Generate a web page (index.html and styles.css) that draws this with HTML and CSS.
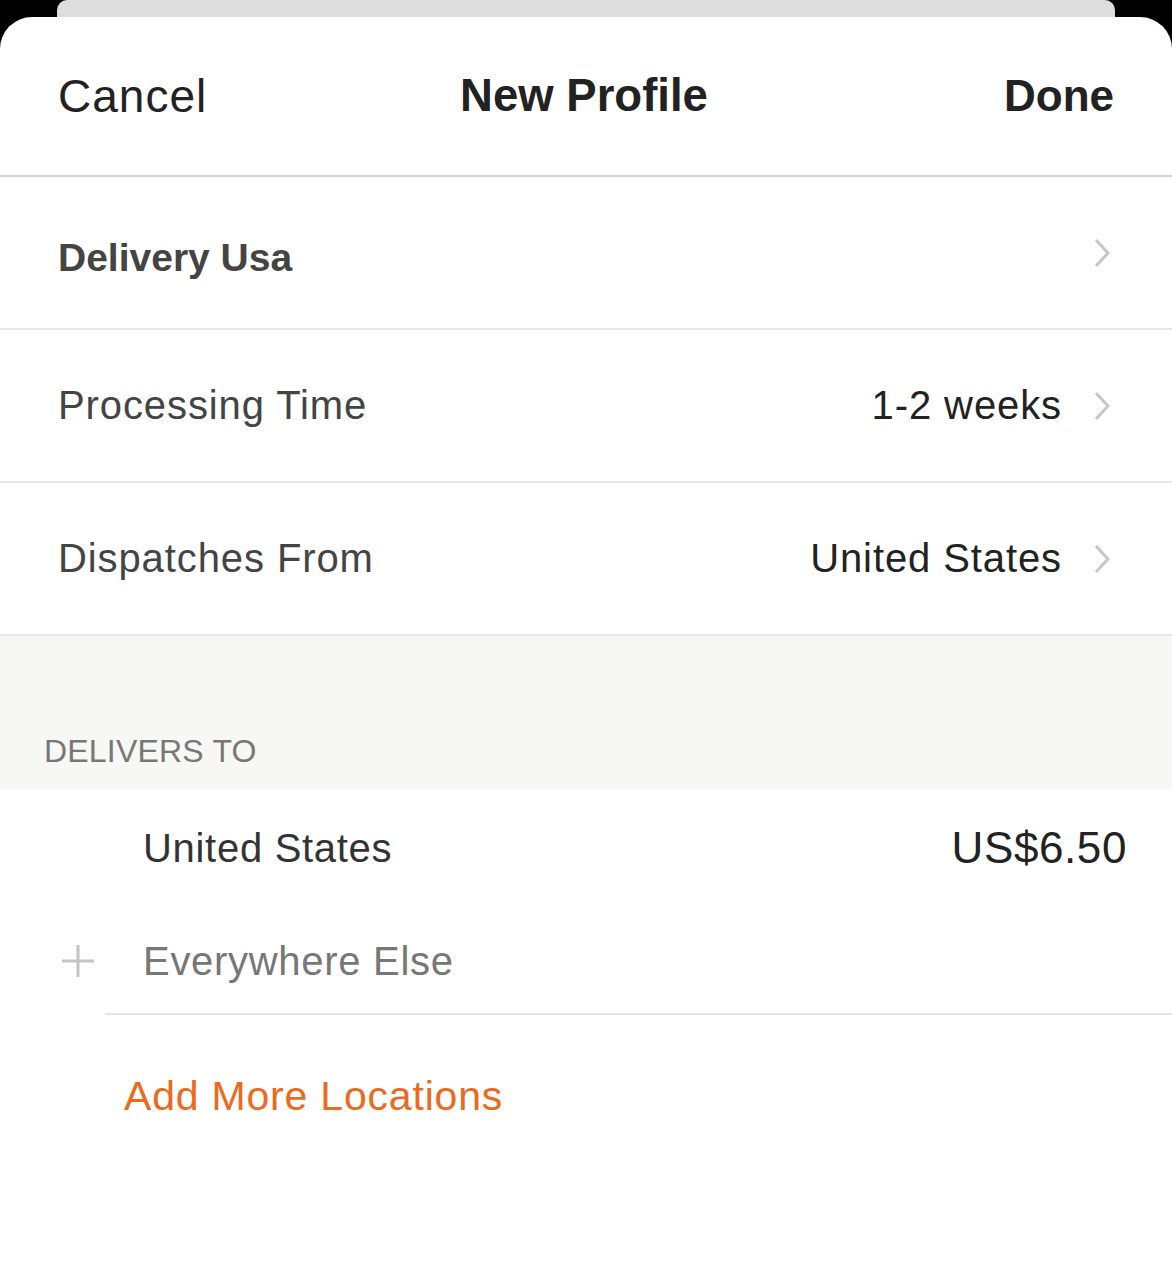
FILE: index.html
```html
<!DOCTYPE html>
<html>
<head>
  <title>New Profile</title>
  <meta http-equiv="Content-Type" content="text/html; charset=UTF-8">
  <link rel="stylesheet" href="styles.css">
</head>
<body>
  <div class="backcard"></div>

  <div class="sheet">
    <div class="header">
      <span class="header-cancel">Cancel</span>
      <span class="header-title">New Profile</span>
      <span class="header-done">Done</span>
    </div>

    <div class="row row-name">
      <span class="row-label">Delivery Usa</span>
      <span class="row-right">
        <svg class="chevron" viewBox="0 0 18 32"><path d="M3 3 L15 16 L3 29" /></svg>
      </span>
    </div>

    <div class="row">
      <span class="row-label">Processing Time</span>
      <span class="row-right">
        <span class="row-value">1-2 weeks</span>
        <svg class="chevron" viewBox="0 0 18 32"><path d="M3 3 L15 16 L3 29" /></svg>
      </span>
    </div>

    <div class="row">
      <span class="row-label">Dispatches From</span>
      <span class="row-right">
        <span class="row-value">United States</span>
        <svg class="chevron" viewBox="0 0 18 32"><path d="M3 3 L15 16 L3 29" /></svg>
      </span>
    </div>

    <div class="section-head">DELIVERS TO</div>

    <div class="dest">
      <div class="dest-row">
        <span class="dest-icon"></span>
        <span class="dest-name">United States</span>
        <span class="dest-price">US$6.50</span>
      </div>
      <div class="dest-row dest-add">
        <span class="dest-icon">
          <svg class="plus" viewBox="0 0 34 34"><path d="M17 1 V33 M1 17 H33" /></svg>
        </span>
        <span class="dest-name muted">Everywhere Else</span>
      </div>
      <div class="dest-more">Add More Locations</div>
    </div>
  </div>
</body>
</html>
```

FILE: styles.css
```css
body {
  margin: 0;
  padding: 0;
  background: #000;
  font-family: "Liberation Sans", Arial, sans-serif;
  color: #222;
}

.backcard {
  height: 17px;
  margin: 0 57px;
  background: #dedede;
  border-radius: 10px 10px 0 0;
}

.sheet {
  background: #fff;
  border-radius: 32px 32px 0 0;
  min-height: 1263px;
}

.header {
  display: grid;
  grid-template-columns: 1fr auto 1fr;
  align-items: center;
  height: 158px;
  padding: 0 58px;
  border-bottom: 2px solid #d4d4d4;
}

.header-cancel {
  font-size: 46px;
  letter-spacing: 1px;
  color: #222;
}

.header-title {
  font-size: 45.5px;
  font-weight: bold;
  color: #222;
  padding-right: 4px;
}

.header-done {
  font-size: 44px;
  font-weight: bold;
  color: #222;
  text-align: right;
}

.row {
  display: flex;
  justify-content: space-between;
  align-items: center;
  height: 151px;
  padding: 0 61px 0 58px;
  border-bottom: 2px solid #e8e8e8;
  font-size: 40px;
  letter-spacing: 0.9px;
}

.row-label {
  color: #444;
}

.row-name .row-label {
  font-weight: bold;
  font-size: 39px;
  letter-spacing: 0;
  padding-top: 10px;
}

.row-right {
  display: flex;
  align-items: center;
  gap: 31px;
}

.row-value {
  color: #222;
}

.chevron {
  width: 18px;
  height: 32px;
  fill: none;
  stroke: #c6c6c6;
  stroke-width: 3;
}

.section-head {
  display: flex;
  align-items: flex-end;
  height: 134px;
  padding: 0 0 19px 44px;
  background: #f7f7f3;
  font-size: 32px;
  letter-spacing: 0.2px;
  color: #777;
}

.dest-row {
  display: flex;
  align-items: center;
  height: 118px;
  padding-right: 45px;
  font-size: 40px;
  letter-spacing: 0.7px;
}

.dest-icon {
  display: flex;
  align-items: center;
  width: 143px;
  padding-left: 61px;
  box-sizing: border-box;
}

.dest-name {
  flex: 1;
  color: #333;
}

.dest-name.muted {
  color: #777;
}

.dest-price {
  font-size: 44px;
  letter-spacing: 0.6px;
  color: #222;
}

.dest-add {
  height: 108px;
  position: relative;
}

.dest-add::after {
  content: "";
  position: absolute;
  left: 105px;
  right: 0;
  bottom: 0;
  border-bottom: 2px solid #e4e4e4;
}

.plus {
  width: 34px;
  height: 34px;
  fill: none;
  stroke: #c4c4c4;
  stroke-width: 3;
}

.dest-more {
  padding: 58px 0 0 124px;
  font-size: 41px;
  letter-spacing: 0.8px;
  color: #eb6a1e;
}
```
